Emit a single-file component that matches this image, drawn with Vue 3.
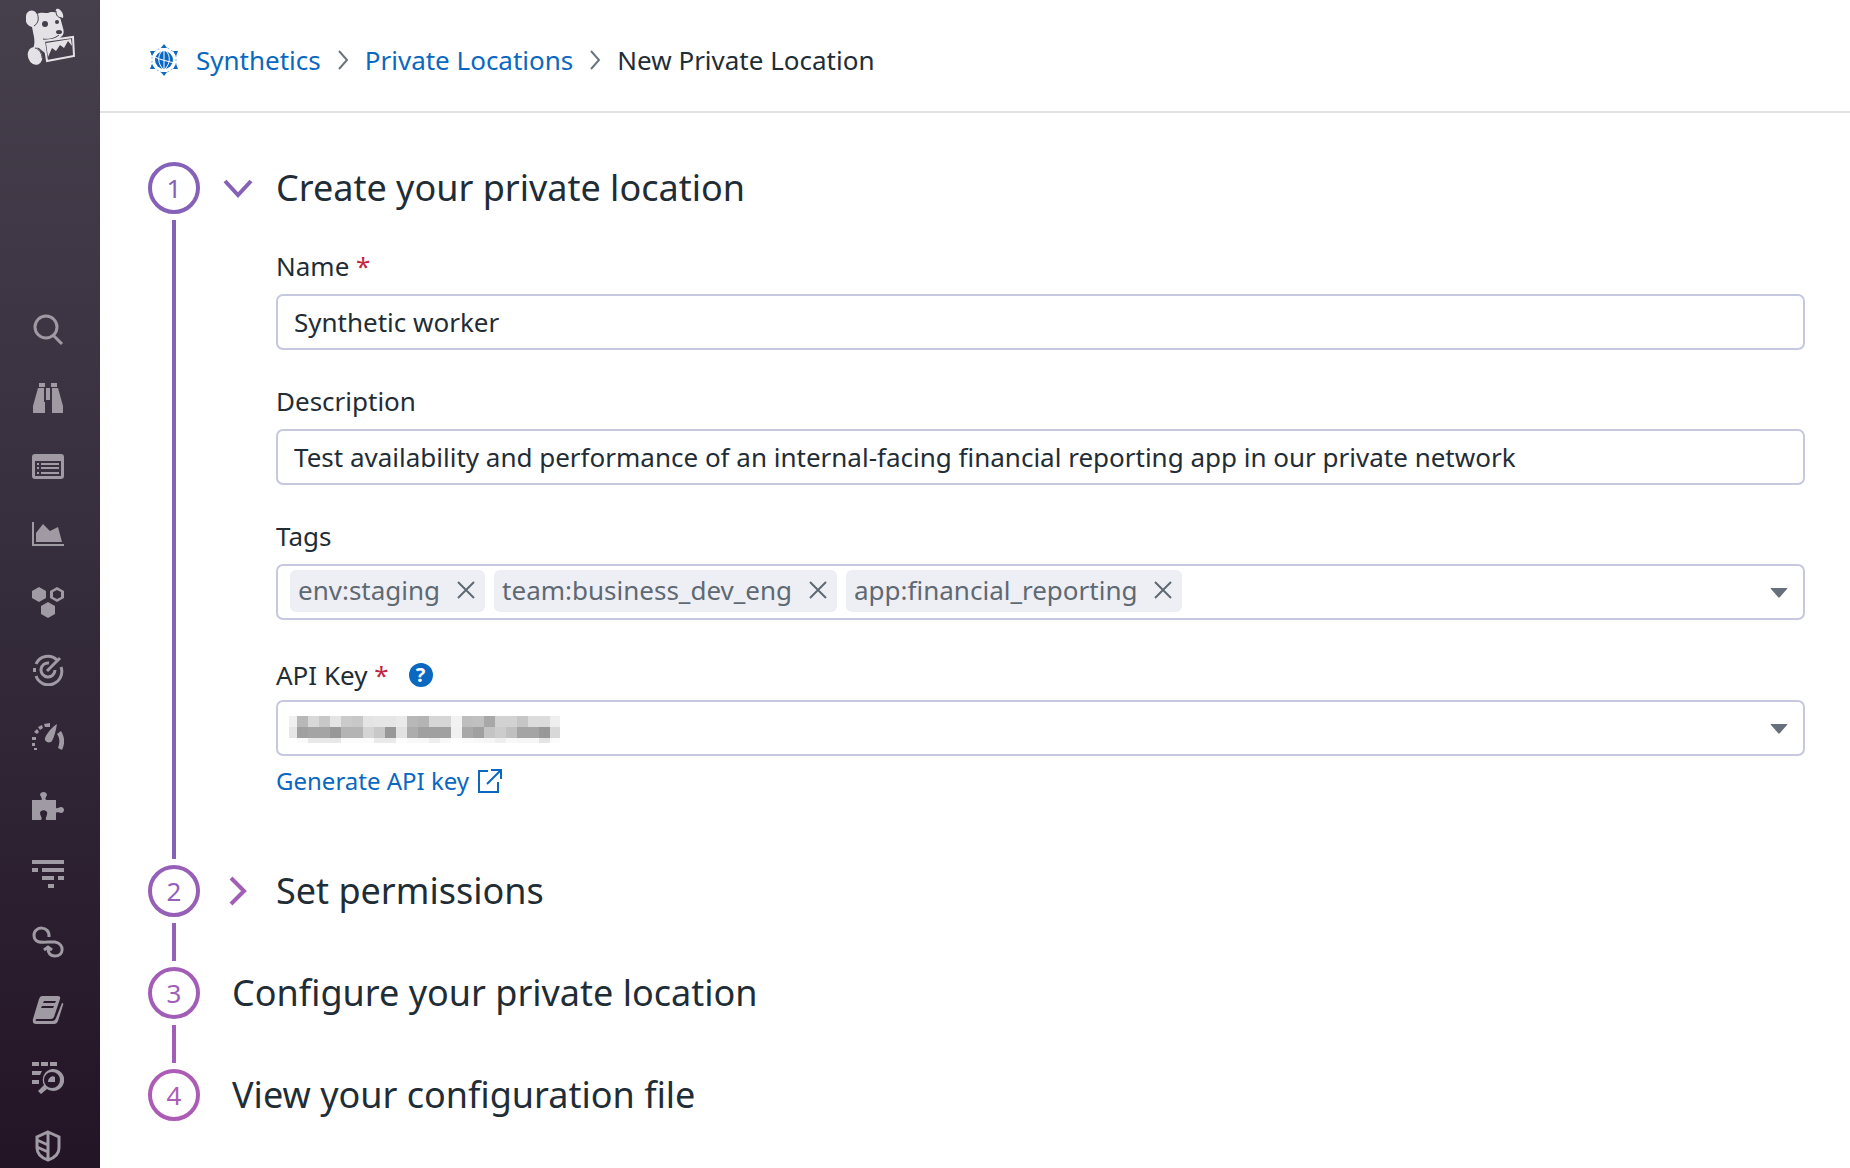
<template>
  <div class="app">
    <nav class="sidebar" aria-label="Main">
      <a href="#" class="logo" aria-label="Home">
        <svg width="50" height="58" viewBox="0 0 50 58">
          <path class="dog" d="M1 5C4 1 9 2 11 6C14 4 19 5 22 5C25 3 28 5 30 4C29 1 31 0 33 1C36 3 38 7 37 10L34 9C35 13 36 16 37 20C38 23 38 26 36 28L33 31L18 33L19 45L14 41C12 39 9 40 7 41C8 38 9 35 8 29L6 19C2 18 -1 15 0 10C0 8 0 6 1 5Z" />
          <ellipse class="dog" cx="9" cy="48" rx="7" ry="9" transform="rotate(-20 9 48)" />
          <path class="ear" d="M11 5C13 9 13 15 8 18M30 3C30 8 32 9 35 10M17 31C22 32 28 31 33 27M9 40C13 41 16 45 16 50" />
          <ellipse class="eye" cx="19" cy="16" rx="3" ry="3" />
          <circle class="eye" cx="31" cy="14" r="2" />
          <ellipse class="eye" cx="33" cy="24" rx="3" ry="2" />
          <path class="frame" d="M18 33L47 29L48 48L21 53Z" />
          <path class="dog" d="M20 35L45 31L46 38L42 33L38 40L34 37L30 43L26 40L22 49Z" />
        </svg>
      </a>
      <ul class="nav">
        <li v-for="item in navItems" :key="item.name">
          <a href="#" :aria-label="item.name">
            <svg width="32" height="32" viewBox="0 0 32 32">
              <path v-if="item.fill" class="solid" fill-rule="evenodd" :d="item.fill" />
              <path v-if="item.line" class="stroke" :d="item.line" />
            </svg>
          </a>
        </li>
      </ul>
    </nav>

    <div class="page">
      <header class="topbar">
        <svg class="globe" width="32" height="34" viewBox="-1 0 32 34">
          <path class="orbit" d="M15 3L27 10V24L15 31L3 24V10Z" />
          <circle class="disc" cx="15" cy="17" r="9" />
          <path class="grid" d="M15 8V26M6 14C11 17 19 18 25 20M13 8C8 13 9 21 14 26M17 8C22 13 21 21 16 26" />
          <path class="disc" d="M15 1L18 5H12ZM15 33L12 29H18ZM1 8L6 8L3 13ZM29 8L24 8L27 13ZM1 26L6 26L3 21ZM29 26L24 26L27 21Z" />
        </svg>
        <a href="#">Synthetics</a>
        <svg class="sep" width="12" height="20" viewBox="0 0 12 20"><path d="M2 1L10 10L2 19" /></svg>
        <a href="#">Private Locations</a>
        <svg class="sep" width="12" height="20" viewBox="0 0 12 20"><path d="M2 1L10 10L2 19" /></svg>
        <span>New Private Location</span>
      </header>

      <main class="steps">
        <section class="step step-1">
          <div class="rail"><span class="number">1</span></div>
          <div class="content">
            <h2>
              <button type="button" class="toggle" :aria-expanded="open" @click="open = !open">
                <svg width="30" height="30" viewBox="0 0 30 30"><path d="M2 8L15 22L28 8" /></svg>
                Create your private location
              </button>
            </h2>
            <form v-show="open" class="form" @submit.prevent>
              <div class="field">
                <label for="name">Name <em>*</em></label>
                <input id="name" v-model="name" type="text" class="box" />
              </div>
              <div class="field">
                <label for="description">Description</label>
                <input id="description" v-model="description" type="text" class="box" />
              </div>
              <div class="field">
                <label for="tags">Tags</label>
                <div class="box tags">
                  <span v-for="tag in tags" :key="tag" class="tag">
                    {{ tag }}
                    <button type="button" :aria-label="'Remove ' + tag" @click="removeTag(tag)">
                      <svg width="18" height="18" viewBox="0 0 18 18"><path d="M1 1L17 17M17 1L1 17" /></svg>
                    </button>
                  </span>
                  <input id="tags" type="text" />
                  <svg class="caret" width="18" height="10" viewBox="0 0 18 10"><path d="M1 0H17Q18 0 17 1L10 9Q9 10 8 9L1 1Q0 0 1 0Z" /></svg>
                </div>
              </div>
              <div class="field key-field">
                <div class="label-row">
                  <label for="api-key">API Key <em>*</em></label>
                  <button type="button" class="help" aria-label="Help">?</button>
                </div>
                <div class="select-wrap">
                  <select id="api-key" class="box"><option></option></select>
                  <svg class="masked" width="271" height="28" viewBox="3 0 271 28" shape-rendering="crispEdges">
                    <rect v-for="(c, i) in cells" :key="i" :x="c.x" :y="c.y" width="11" :height="c.h" :fill="c.color" />
                  </svg>
                  <svg class="caret" width="18" height="10" viewBox="0 0 18 10"><path d="M1 0H17Q18 0 17 1L10 9Q9 10 8 9L1 1Q0 0 1 0Z" /></svg>
                </div>
                <a href="#" class="generate">
                  Generate API key
                  <svg width="26" height="24" viewBox="0 0 26 24"><path d="M12 2H3V23H22V13M15 1H25V10M25 1L11 15" /></svg>
                </a>
              </div>
            </form>
          </div>
        </section>

        <section class="step step-2">
          <div class="rail"><span class="number">2</span></div>
          <div class="content">
            <h2>
              <button type="button" class="toggle" aria-expanded="false">
                <svg width="30" height="30" viewBox="0 0 30 30"><path d="M8 2L21 15L8 28" /></svg>
                Set permissions
              </button>
            </h2>
          </div>
        </section>

        <section class="step step-3">
          <div class="rail"><span class="number">3</span></div>
          <div class="content"><h2 class="plain">Configure your private location</h2></div>
        </section>

        <section class="step step-4">
          <div class="rail"><span class="number">4</span></div>
          <div class="content"><h2 class="plain">View your configuration file</h2></div>
        </section>
      </main>
    </div>
  </div>
</template>

<script setup>
import { ref } from 'vue'

const open = ref(true)
const name = ref('Synthetic worker')
const description = ref('Test availability and performance of an internal-facing financial reporting app in our private network')
const tags = ref(['env:staging', 'team:business_dev_eng', 'app:financial_reporting'])

function removeTag(tag) {
  tags.value = tags.value.filter((t) => t !== tag)
}

// grey level of every block of the masked key, row by row
const rows = [
  { y: 0, h: 11, levels: 'f0 b8 d8 c8 e4 cb c8 e4 e6 e6 ea b8 b4 d6 d6 f2 be c0 a8 d2 d2 c6 dc dc ee' },
  { y: 11, h: 11, levels: 'e6 a0 a4 a4 98 b4 b4 d4 c8 98 e2 ac a0 a0 a0 f0 a8 a0 c4 cc c0 a4 a4 98 d8' },
  { y: 22, h: 5, levels: 'ff fa e8 e8 e8 fb fb fb ea ea fc f8 f8 ee f8 ff fa f8 f6 ee f8 f6 f6 e4 fb' },
]
const cells = rows.flatMap((row) =>
  row.levels.split(' ').map((l, i) => ({ x: i * 11, y: row.y, h: row.h, color: '#' + l + l + l }))
)

const navItems = [
  { name: 'Search', line: 'M25 13A11 11 0 1 1 3 13A11 11 0 1 1 25 13M21 21L30 30' },
  { name: 'Watchdog', fill: 'M7 1H13V5H7ZM19 1H25V5H19ZM6 6H12V20H13V31H1V24ZM20 6H26L31 24V31H20V20ZM14 6H18V18H14Z' },
  { name: 'Dashboards', fill: 'M3 4H29Q32 4 32 7V26Q32 29 29 29H3Q0 29 0 26V7Q0 4 3 4ZM3 11V26H29V11ZM5 13H7V15H5ZM9 13H27V15H9ZM5 17H7V19H5ZM9 17H27V19H9ZM5 22H7V24H5ZM9 22H27V24H9Z' },
  { name: 'Metrics', fill: 'M0 4H2V26H32V28H0ZM4 24V15L11 6L18 13L26 9L30 24Z' },
  { name: 'Infrastructure', fill: 'M7 1L14 5V12L7 16L0 12V5ZM16 16L23 20V28L16 32L9 28V20ZM25 1L32 5V12L25 16L18 12V5ZM25 4L21 6V11L25 13L29 11V6Z' },
  { name: 'Monitors', line: 'M4 10A13 13 0 0 1 25 6M29 13A13 13 0 0 1 4 22M23 16A7 7 0 1 1 17 9M15 17L28 4', fill: 'M1 14H4V18H1Z' },
  { name: 'APM', fill: 'M25 2C24 9 22 15 20 19C18 22 12 20 13 16C15 11 20 5 25 2ZM29 9C33 15 33 22 30 28L26 26C28 21 28 16 25 12ZM12 2L18 1V5H13ZM6 5L10 3L11 6L8 8ZM2 10L5 7L7 10L5 12ZM0 15H4V18H0ZM0 21H3V24H0ZM2 26H5V28H2Z' },
  { name: 'Integrations', fill: 'M0 10H9C11 10 9 7 8 5C8 1 15 1 15 5C14 7 12 10 15 10H24V17C24 20 27 17 29 17C33 17 33 23 29 23C27 23 24 21 24 24V30H14C13 28 16 25 15 22C13 19 8 20 8 23C8 26 11 28 9 30H0Z' },
  { name: 'Logs', fill: 'M0 2H32V6H0ZM0 10H6V14H0ZM10 10H32V14H10ZM10 18H22V22H10ZM26 18H32V22H26ZM16 26H22V30H16Z' },
  { name: 'Synthetics', line: 'M17 11C18 -1 2 0 2 9C2 20 15 15 23 16C33 18 32 30 23 30C18 30 16 27 16 22M12 24L16 21L20 24' },
  { name: 'Notebooks', fill: 'M10 2H26Q29 2 28 5L22 23Q21 25 19 25H5Q3 25 4 27H21Q23 27 24 24L30 9Q32 9 31 11L26 27Q25 30 22 30H4Q0 30 1 25L7 5Q8 2 10 2ZM12 7L11 9H23L24 7ZM10 12L9 14H21L22 12Z' },
  { name: 'Log analytics', fill: 'M0 0H7V4H0ZM9 0H16V4H9ZM18 0H25V4H18ZM0 9H10L8 13H0ZM0 18H7V22H0ZM20 7A11 11 0 1 1 15 27L9 32L6 29L12 23A11 11 0 0 1 20 7ZM20 10A8 8 0 1 0 20 26A8 8 0 1 0 20 10ZM16 20C16 16 20 13 23 15V20Z' },
  { name: 'Security', line: 'M16 2L27 7V18C27 24 22 28 16 30C10 28 5 24 5 18V7ZM16 2V30M5 10L16 15M5 17L16 22' },
]
</script>

<style>
body {
  margin: 0;
}
</style>

<style scoped>
.app {
  display: flex;
  min-height: 100vh;
  background: #fff;
  color: #1f2d36;
  font-family: 'Noto Sans', sans-serif;
  font-size: 26px;
  line-height: 36px;
}
* {
  box-sizing: border-box;
}
a {
  color: #0b68c1;
  text-decoration: none;
}
button {
  padding: 0;
  border: 0;
  background: none;
  color: inherit;
  font: inherit;
  cursor: pointer;
}
svg {
  display: block;
  flex: none;
}
path {
  fill: none;
}
.sidebar {
  width: 100px;
  flex: none;
  height: 100vh;
  overflow: hidden;
  position: sticky;
  top: 0;
  padding-top: 8px;
  background: linear-gradient(#463f4c, #372f3d 45%, #231426);
}
.logo {
  display: block;
  height: 288px;
  padding-left: 26px;
}
.dog {
  fill: #e4e2e6;
}
.ear {
  stroke: #453e4b;
  stroke-width: 1;
}
.eye {
  fill: #453e4b;
}
.frame {
  fill: #453e4b;
  stroke: #e4e2e6;
  stroke-width: 2;
}
.nav {
  margin: 0;
  padding: 0;
  list-style: none;
}
.nav a {
  display: flex;
  align-items: center;
  height: 68px;
  padding-left: 32px;
}
.solid {
  fill: #9f9aa3;
}
.stroke {
  stroke: #9f9aa3;
  stroke-width: 3;
}
.page {
  flex: 1;
  min-width: 0;
}
.topbar {
  display: flex;
  align-items: center;
  gap: 16px;
  height: 113px;
  padding: 8px 48px 0;
  border-bottom: 2px solid #e3e3e6;
}
.orbit {
  stroke: #7fafdf;
  stroke-width: 1;
  stroke-dasharray: 2 2;
}
.disc {
  fill: #0b68c1;
}
.grid {
  stroke: #fff;
  stroke-width: 1;
}
.sep path {
  stroke: #6c757c;
  stroke-width: 2;
}
.steps {
  padding: 49px 45px 47px 48px;
}
.step {
  display: flex;
  gap: 20px;
}
.rail {
  display: flex;
  flex-direction: column;
  align-items: center;
  gap: 6px;
  flex: none;
  width: 52px;
}
.number {
  display: flex;
  align-items: center;
  justify-content: center;
  width: 52px;
  height: 52px;
  border: 4px solid;
  border-radius: 50%;
}
.rail::after {
  content: '';
  flex: 1;
  width: 4px;
  margin-bottom: 6px;
  background: currentColor;
}
.step:last-child .rail::after {
  display: none;
}
.step-1 {
  color: #8661b8;
}
.step-2 {
  color: #965fb8;
}
.step-3 {
  color: #a25eb7;
}
.step-4 {
  color: #ad5cb6;
}
.content {
  flex: 1;
  min-width: 0;
  padding-bottom: 50px;
}
.step-1 .content {
  padding-bottom: 66px;
}
.step:last-child .content {
  padding-bottom: 0;
}
h2 {
  margin: 0;
  font-size: 36px;
  font-weight: 400;
  line-height: 52px;
}
.plain {
  padding-left: 12px;
  color: #1f2d36;
}
.toggle {
  display: flex;
  align-items: center;
  gap: 23px;
  padding-left: 3px;
  color: #1f2d36;
}
.toggle path {
  stroke-width: 4;
}
.step-1 .toggle path {
  stroke: #8661b8;
}
.step-2 .toggle path {
  stroke: #a25eb7;
}
.form {
  display: flex;
  flex-direction: column;
  gap: 33px;
  padding: 34px 0 0 56px;
  color: #1f2d36;
}
.field {
  display: flex;
  flex-direction: column;
  gap: 10px;
}
.key-field {
  gap: 7px;
  padding-top: 4px;
}
em {
  color: #c22742;
  font-style: normal;
}
.box {
  width: 100%;
  height: 56px;
  padding: 0 16px;
  border: 2px solid #c6c8e0;
  border-radius: 7px;
  background: #fff;
  color: inherit;
  font: inherit;
  appearance: none;
}
.tags {
  display: flex;
  align-items: center;
  gap: 9px;
  padding: 0 15px 0 12px;
}
.tag {
  display: flex;
  align-items: center;
  gap: 17px;
  height: 42px;
  margin-bottom: 2px;
  padding: 0 10px 2px 8px;
  border-radius: 6px;
  background: #eeeef5;
  color: #5e6972;
}
.tag path {
  stroke: #5e6972;
  stroke-width: 2;
}
.tags input {
  flex: 1;
  min-width: 0;
  border: 0;
  outline: 0;
  background: none;
  font: inherit;
}
.tags .caret {
  margin-top: 2px;
}
.caret path {
  fill: #66707a;
}
.label-row {
  display: flex;
  align-items: center;
  gap: 20px;
}
.help {
  width: 24px;
  height: 24px;
  border-radius: 50%;
  background: #0b68c1;
  color: #fff;
  font-size: 20px;
  font-weight: 700;
  line-height: 24px;
}
.select-wrap {
  position: relative;
}
.select-wrap .caret {
  position: absolute;
  top: 24px;
  right: 17px;
  pointer-events: none;
}
.masked {
  position: absolute;
  top: 16px;
  left: 13px;
  pointer-events: none;
}
.generate {
  display: flex;
  align-items: center;
  align-self: flex-start;
  gap: 7px;
  font-size: 24px;
}
.generate path {
  stroke: #0b68c1;
  stroke-width: 2;
}
</style>
